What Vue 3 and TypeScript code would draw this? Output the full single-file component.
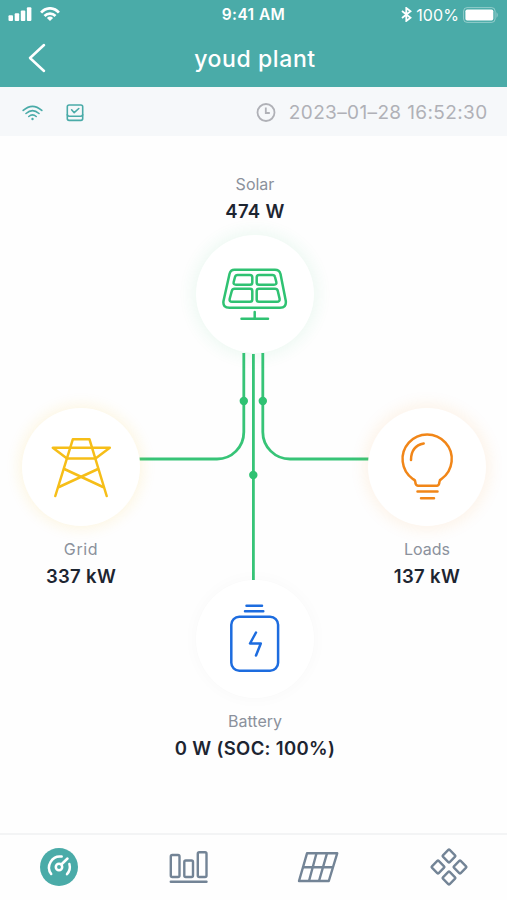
<script setup lang="ts">
interface FlowNode {
  id: 'solar' | 'grid' | 'loads' | 'battery'
  label: string
  value: string
}

const plantName = 'youd plant'
const updatedAt = '2023–01–28 16:52:30'

const nodes: FlowNode[] = [
  { id: 'solar', label: 'Solar', value: '474 W' },
  { id: 'grid', label: 'Grid', value: '337 kW' },
  { id: 'loads', label: 'Loads', value: '137 kW' },
  { id: 'battery', label: 'Battery', value: '0 W (SOC: 100%)' },
]
</script>

<template>
  <div class="screen">
    <header class="header">
      <div class="status">
        <div class="status-side">
          <svg class="signal" width="24" height="15" viewBox="0 0 24 15" fill="#fff">
            <rect x="0.5" y="8.3" width="4.5" height="5.7" rx="1" />
            <rect x="6.7" y="6.3" width="4.5" height="7.7" rx="1" />
            <rect x="12.8" y="3.5" width="4.5" height="10.5" rx="1" />
            <rect x="18.9" y="0.2" width="4.5" height="13.8" rx="1" />
          </svg>
          <svg width="20" height="15" viewBox="0 0 20 15" fill="none" stroke="#fff" stroke-width="2.7">
            <path d="M1.1 5.6C6-.1 14-.1 18.9 5.6" />
            <path d="M4.5 9C7.5 5.7 12.5 5.7 15.5 9" />
            <path d="M10 14 6.9 10.9Q10 8.2 13.1 10.9Z" fill="#fff" stroke="none" />
          </svg>
        </div>
        <span class="clock">9:41 AM</span>
        <div class="status-side right">
          <svg width="11" height="15" viewBox="0 0 11 15" fill="none" stroke="#fff" stroke-width="1.8">
            <path d="M1 4 9.5 10.8 5.3 14V1L9.5 4.2 1 11" />
          </svg>
          <span class="percent">100%</span>
          <svg class="cell" width="36" height="16" viewBox="0 0 36 16">
            <rect x="0.6" y="0.6" width="31.5" height="14.8" rx="3.5" fill="none" stroke="#fff" stroke-opacity=".4" />
            <rect x="2.4" y="2.4" width="27.9" height="11.2" rx="1.8" fill="#fff" />
            <path d="M33.5 5Q36 8 33.5 11Z" fill="#fff" fill-opacity=".4" />
          </svg>
        </div>
      </div>
      <div class="titlebar">
        <svg class="back" width="18" height="30" viewBox="0 0 18 30" fill="none" stroke="#fff" stroke-width="2.5" stroke-linecap="round" stroke-linejoin="round">
          <path d="M16 2 2 15 16 28" />
        </svg>
        <h1>{{ plantName }}</h1>
      </div>
    </header>

    <section class="info">
      <svg width="21" height="16" viewBox="0 0 21 16" fill="none" stroke="#4aaba8" stroke-width="1.6" stroke-linecap="round">
        <path d="M1.2 5.4Q10.5-2.8 19.8 5.4M4 8.5Q10.5 2.8 17 8.5M6.8 11.5Q10.5 8.3 14.2 11.5" />
        <circle cx="10.5" cy="14" r="1.2" fill="#4aaba8" stroke="none" />
      </svg>
      <svg class="check" width="18" height="18" viewBox="0 0 18 18" fill="none" stroke="#4aaba8" stroke-width="1.6" stroke-linecap="round" stroke-linejoin="round">
        <rect x="1.3" y="1" width="15.4" height="15.4" rx="1.8" />
        <path d="M1.3 10.8Q2 12.3 3.5 12.3H14.5Q16 12.3 16.700 10.800M5.600 5.800 8.200 8.700 12.800 4.500" />
      </svg>
      <div class="stamp">
        <svg width="20" height="20" viewBox="0 0 20 20" fill="none" stroke="#b0b1b7" stroke-width="1.8">
          <circle cx="10" cy="9.500" r="8.500" />
          <path d="M9.800 4.500V10H13.800" />
        </svg>
        <time>{{ updatedAt }}</time>
      </div>
    </section>

    <main class="flow">
      <svg class="wires" width="507" height="697" viewBox="0 136 507 697" fill="none" stroke="#37c477" stroke-width="2.8">
        <path d="M243.800 353V432C243.800 447 232 459 217 459H139.500" />
        <path d="M253.400 354V580" />
        <path d="M262.800 353V432C262.800 447 275 459 290 459H368.500" />
        <g fill="#2fc272" stroke="none">
          <circle cx="243.800" cy="401" r="4.200" />
          <circle cx="262.800" cy="401" r="4.200" />
          <circle cx="253.300" cy="475" r="4.200" />
        </g>
      </svg>

      <div v-for="node in nodes" :key="node.id" class="node" :class="node.id">
        <div class="disc">
          <svg v-if="node.id === 'solar'" width="118" height="118" viewBox="196 235 118 118" fill="none" stroke="#2fc272" stroke-width="2.500" stroke-linecap="round" stroke-linejoin="round">
            <path d="M234.500 269.800H275Q279.300 269.800 280.500 274L285.800 301Q286.500 307.800 280 307.800H229.500Q222.500 307.800 223.500 301L229.500 274Q230.500 269.800 234.500 269.800Z" />
            <path d="M237.500 275H250Q252.300 275 252.300 277.300V282.400Q252.300 284.700 250 284.700H236Q233 284.700 233.700 282L235 277Q235.500 275 237.500 275Z" />
            <path d="M259 275H272.500Q274.600 275 275 277L276.300 282Q277 284.700 274 284.700H259Q256.700 284.700 256.700 282.400V277.300Q256.700 275 259 275Z" />
            <path d="M234.500 288.800H250Q252.300 288.800 252.300 291V299.500Q252.300 301.800 250 301.800H232Q229 301.800 229.700 298.800L231.800 291Q232.400 288.800 234.500 288.800Z" />
            <path d="M259 288.800H275Q277.300 288.800 277.800 291L279.600 298.800Q280 301.800 277 301.800H259Q256.700 301.800 256.700 299.500V291Q256.700 288.800 259 288.800Z" />
            <path d="M254.700 312V318.700M241.500 318.700H268" />
          </svg>
          <svg v-else-if="node.id === 'grid'" width="118" height="118" viewBox="22 408 118 118" fill="none" stroke="#f6be18" stroke-width="2.500" stroke-linecap="round" stroke-linejoin="round">
            <path d="M55.300 496 72.800 439.300H89.500L106.700 496" />
            <path d="M52.800 447.800H109.800L95.500 458.500H67Z" />
            <path d="M64.300 469 103 487M98 469 59 487" />
          </svg>
          <svg v-else-if="node.id === 'loads'" width="118" height="118" viewBox="368 408 118 118" fill="none" stroke="#f18618" stroke-width="2.500" stroke-linecap="round" stroke-linejoin="round">
            <path d="M418 485.800Q415.500 485.500 415.300 482Q415.200 479.800 412.800 479A24.600 24.600 0 1 1 441.500 479Q439.500 479.800 439.400 482Q439.200 485.500 437 485.800Z" />
            <path d="M411 460Q411 446 423.700 443.500M417.500 491.500H437.500M421 498.300H434" />
          </svg>
          <svg v-else width="118" height="118" viewBox="196 580 118 118" fill="none" stroke="#1d6cdf" stroke-width="2.500" stroke-linecap="round" stroke-linejoin="round">
            <rect x="231.300" y="616.700" width="46.800" height="54" rx="8" />
            <path d="M246.500 605.800H262M245 611.300H263.300" />
            <path d="M256 632.500 250 643.500H260.800L256 655.500" />
          </svg>
        </div>
        <div class="reading">
          <span class="label">{{ node.label }}</span>
          <strong class="value">{{ node.value }}</strong>
        </div>
      </div>
    </main>

    <nav class="tabs">
      <a class="tab" aria-label="Overview">
        <svg width="40" height="40" viewBox="0 0 40 40" fill="none" stroke="#fff" stroke-width="2.500" stroke-linecap="round">
          <circle cx="20" cy="20" r="19" fill="#4aaba8" stroke="none" />
          <path d="M12.200 27A11 11 0 0 1 22.700 9.600M30.400 17A11 11 0 0 1 28 27.200M22.300 17.500 28.500 11.500" />
          <circle cx="20" cy="20" r="3.200" />
        </svg>
      </a>
      <a class="tab" aria-label="Statistics">
        <svg width="40" height="40" viewBox="0 0 40 40" fill="none" stroke="#738496" stroke-width="2.400" stroke-linecap="round">
          <rect x="2.800" y="8" width="8.700" height="22" rx="1.500" />
          <rect x="16.300" y="13.500" width="8.700" height="16.500" rx="1.500" />
          <rect x="29.800" y="5.300" width="8.700" height="24.700" rx="1.500" />
          <path d="M2.800 34.700H38.500" />
        </svg>
      </a>
      <a class="tab" aria-label="Panels">
        <svg width="44" height="40" viewBox="0 0 44 40" fill="none" stroke="#738496" stroke-width="2.400" stroke-linejoin="round">
          <path d="M11 6.300H41.200L32.800 34H3Z" />
          <path d="M20.500 6.300 13 34M31 6.300 23 34M7 20.300H37" />
        </svg>
      </a>
      <a class="tab" aria-label="Devices">
        <svg width="40" height="40" viewBox="0 0 40 40" fill="none" stroke="#738496" stroke-width="2.400">
          <rect v-for="[x, y] in [[20, 9], [9, 20], [31, 20], [20, 31]]" :key="`${x}-${y}`" :x="x - 4.8" :y="y - 4.8" width="9.600" height="9.600" rx="1" :transform="`rotate(45 ${x} ${y})`" />
        </svg>
      </a>
    </nav>
  </div>
</template>

<style>
body {
  margin: 0;
  background: #fff;
}
</style>

<style scoped>
.screen {
  width: 507px;
  height: 900px;
  display: flex;
  flex-direction: column;
  overflow: hidden;
  background: #fefefe;
  color: #1d2531;
  font-family: Inter, 'Liberation Sans', sans-serif;
}
.header {
  height: 87px;
  background: #4aaba8;
  color: #fff;
}
.status {
  height: 29px;
  display: grid;
  grid-template-columns: 1fr auto 1fr;
  align-items: center;
  padding: 0 8px;
  box-sizing: border-box;
}
.status-side {
  display: flex;
  align-items: center;
  gap: 8px;
}
.right {
  justify-content: flex-end;
  gap: 4px;
}
.clock {
  font-size: 15.5px;
  font-weight: 600;
  letter-spacing: 0.4px;
}
.percent {
  font-size: 16px;
  letter-spacing: 0.1px;
}
.titlebar {
  height: 58px;
  display: grid;
  grid-template-columns: 80px 1fr 80px;
  align-items: center;
}
.back {
  margin-left: 28px;
}
h1 {
  margin: 0;
  padding: 2px 0 0 3px;
  text-align: center;
  font-size: 23px;
  font-weight: 500;
  letter-spacing: 0.6px;
}
.info {
  height: 49px;
  display: flex;
  align-items: center;
  padding: 2px 19.5px 0 22px;
  box-sizing: border-box;
  background: #f6f8fa;
}
.check {
  margin-left: 23px;
}
.stamp {
  display: flex;
  align-items: center;
  gap: 13px;
  margin-left: auto;
  color: #b0b1b7;
  font-size: 19px;
  letter-spacing: 0.37px;
  white-space: nowrap;
}
.flow {
  position: relative;
  height: 697px;
}
.wires {
  position: absolute;
  inset: 0;
}
.node {
  position: absolute;
  width: 180px;
  display: flex;
  flex-direction: column;
  align-items: center;
}
.solar {
  flex-direction: column-reverse;
  left: 165px;
  top: 38px;
}
.grid {
  left: -9px;
  top: 272px;
}
.loads {
  left: 337px;
  top: 272px;
}
.battery {
  left: 165px;
  top: 444px;
}
.disc {
  width: 118px;
  height: 118px;
  border-radius: 50%;
  background: #fff;
}
.disc svg {
  display: block;
}
.solar .disc {
  box-shadow: 0 0 16px 3px rgba(47, 194, 114, 0.09);
}
.grid .disc {
  box-shadow: 0 0 14px 3px rgba(246, 190, 24, 0.12);
}
.loads .disc {
  box-shadow: 0 0 16px 3px rgba(241, 134, 24, 0.1);
}
.battery .disc {
  box-shadow: 0 0 14px 3px rgba(29, 40, 60, 0.02);
}
.reading {
  display: flex;
  flex-direction: column;
  align-items: center;
  padding-top: 13px;
  white-space: nowrap;
}
.solar .reading {
  padding: 0 0 11px;
}
.label {
  color: #8b919c;
  font-size: 16px;
  line-height: 20px;
}
.grid .label {
  letter-spacing: 0.6px;
}
.value {
  margin-top: 4px;
  font-size: 18.5px;
  font-weight: 600;
  letter-spacing: 0.33px;
  line-height: 26px;
}
.tabs {
  flex: 1;
  display: flex;
  align-items: center;
  justify-content: space-between;
  padding: 0 38px 2px 39px;
  border-top: 2px solid #f3f4f5;
}
.tab {
  display: flex;
}
</style>
